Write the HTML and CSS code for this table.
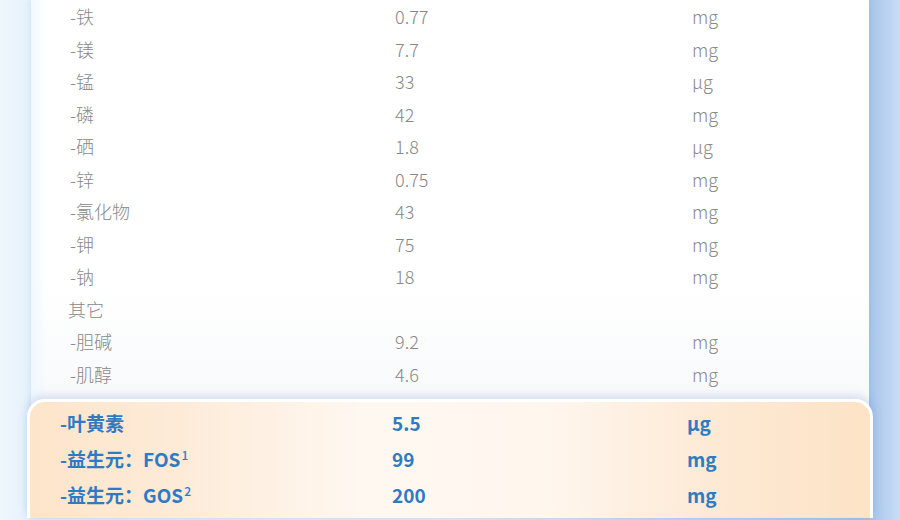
FILE: index.html
```html
<!DOCTYPE html>
<html lang="zh-CN">
<head>
<meta charset="utf-8">
<title>营养成分表</title>
<link rel="stylesheet" href="styles.css">
</head>
<body>
<div class="page">
  <div class="card">
    <div class="rows">
      <div class="row"><span class="name">-铁</span><span class="val">0.77</span><span class="unit">mg</span></div>
      <div class="row"><span class="name">-镁</span><span class="val">7.7</span><span class="unit">mg</span></div>
      <div class="row"><span class="name">-锰</span><span class="val">33</span><span class="unit">µg</span></div>
      <div class="row"><span class="name">-磷</span><span class="val">42</span><span class="unit">mg</span></div>
      <div class="row"><span class="name">-硒</span><span class="val">1.8</span><span class="unit">µg</span></div>
      <div class="row"><span class="name">-锌</span><span class="val">0.75</span><span class="unit">mg</span></div>
      <div class="row"><span class="name">-氯化物</span><span class="val">43</span><span class="unit">mg</span></div>
      <div class="row"><span class="name">-钾</span><span class="val">75</span><span class="unit">mg</span></div>
      <div class="row"><span class="name">-钠</span><span class="val">18</span><span class="unit">mg</span></div>
      <div class="row"><span class="name group">其它</span><span class="val"></span><span class="unit"></span></div>
      <div class="row"><span class="name">-胆碱</span><span class="val">9.2</span><span class="unit">mg</span></div>
      <div class="row"><span class="name">-肌醇</span><span class="val">4.6</span><span class="unit">mg</span></div>
    </div>
    <div class="highlight">
      <div class="hrow"><span class="name">-叶黄素</span><span class="val">5.5</span><span class="unit">µg</span></div>
      <div class="hrow"><span class="name">-益生元：FOS<sup class="note">1</sup></span><span class="val">99</span><span class="unit">mg</span></div>
      <div class="hrow"><span class="name">-益生元：GOS<sup class="note">2</sup></span><span class="val">200</span><span class="unit">mg</span></div>
    </div>
  </div>
</div>
</body>
</html>
```

FILE: styles.css
```css
html, body {
  margin: 0;
  padding: 0;
}

body {
  width: 900px;
  height: 520px;
  overflow: hidden;
  font-family: "Noto Sans CJK SC", "Noto Sans", sans-serif;
  background: linear-gradient(90deg, #eff7fe 0px, #e6f1fb 31px, #e6f1fb 50%, #a6c4ea 869px, #c9ddf6 900px);
}

.page {
  padding: 0 31px;
}

.card {
  background:
    linear-gradient(90deg, rgba(236, 246, 255, 0.8) 0px, rgba(255, 255, 255, 0) 16px),
    linear-gradient(180deg, #ffffff 0%, #ffffff 55%, #f2f4f8 100%);
  box-shadow: 0 0 6px rgba(120, 160, 210, 0.25);
}

.rows {
  padding-left: 39px;
  padding-bottom: 9px;
}

.row {
  display: grid;
  grid-template-columns: 325px 297px 1fr;
  height: 32.5px;
  align-items: center;
  font-size: 18px;
  color: #888888;
  font-weight: 300;
}

.row .group {
  margin-left: -2px;
}

.highlight {
  margin: 0 -4px;
  border: 3px solid #ffffff;
  border-bottom: none;
  border-radius: 18px 18px 0 0;
  padding: 2px 0 6px 30px;
  background: linear-gradient(90deg, #fde5ca 0%, #fdebd8 18%, #fff8f1 40%, #fff6ee 62%, #fde9d4 82%, #fde3c6 100%);
  box-shadow: 0 -3px 10px rgba(100, 140, 200, 0.28);
}

.hrow {
  display: grid;
  grid-template-columns: 332px 295px 1fr;
  height: 36px;
  align-items: center;
  font-size: 19px;
  font-weight: 700;
  color: #2f7bc3;
}

.note {
  font-size: 12px;
  font-weight: 500;
  margin-left: 1px;
  vertical-align: 7px;
  line-height: 0;
}
```
